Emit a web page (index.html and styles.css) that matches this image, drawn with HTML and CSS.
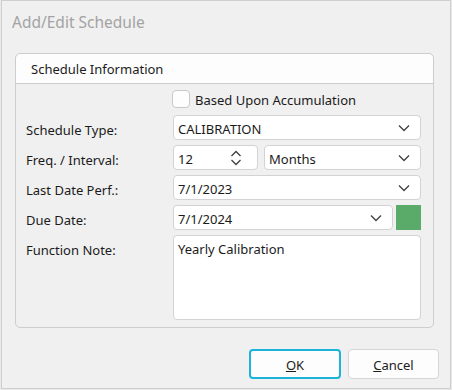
FILE: index.html
```html
<!DOCTYPE html>
<html lang="en">
<head>
    <meta charset="UTF-8">
    <title>Add/Edit Schedule</title>
    <link rel="stylesheet" href="styles.css">
</head>
<body>

<div class="dialog">
    <div class="dialog-title">Add/Edit Schedule</div>

    <div class="group">
        <div class="group-header">Schedule Information</div>
        <div class="group-body">
            <div class="label"></div>
            <label class="check-row">
                <span class="checkbox"></span>
                <span>Based Upon Accumulation</span>
            </label>

            <div class="label">Schedule Type:</div>
            <div class="field combo">
                <span>CALIBRATION</span>
                <svg class="chevron" width="12" height="8" viewBox="0 0 12 8"><path d="M1 1.5 L6 6.5 L11 1.5" /></svg>
            </div>

            <div class="label">Freq. / Interval:</div>
            <div class="pair">
                <div class="field spin">
                    <span>12</span>
                    <svg class="spinner" width="12" height="16" viewBox="0 0 12 16"><path d="M1.5 6 L6 1.5 L10.5 6 M1.5 10 L6 14.5 L10.5 10" /></svg>
                </div>
                <div class="field combo grow">
                    <span>Months</span>
                    <svg class="chevron" width="12" height="8" viewBox="0 0 12 8"><path d="M1 1.5 L6 6.5 L11 1.5" /></svg>
                </div>
            </div>

            <div class="label">Last Date Perf.:</div>
            <div class="field combo">
                <span>7/1/2023</span>
                <svg class="chevron" width="12" height="8" viewBox="0 0 12 8"><path d="M1 1.5 L6 6.5 L11 1.5" /></svg>
            </div>

            <div class="label">Due Date:</div>
            <div class="pair">
                <div class="field combo grow">
                    <span>7/1/2024</span>
                    <svg class="chevron" width="12" height="8" viewBox="0 0 12 8"><path d="M1 1.5 L6 6.5 L11 1.5" /></svg>
                </div>
                <div class="status-swatch"></div>
            </div>

            <div class="label label-top">Function Note:</div>
            <div class="field note">Yearly Calibration</div>
        </div>
    </div>

    <div class="button-row">
        <button class="button default"><u>O</u>K</button>
        <button class="button"><u>C</u>ancel</button>
    </div>
</div>

</body>
</html>
```

FILE: styles.css
```css
body {
    margin: 0;
    background-color: #e9e9e9;
    font-family: "Noto Sans", "Open Sans", sans-serif;
    font-size: 13px;
    color: #1b1b1b;
}
.dialog {
    box-sizing: border-box;
    width: 450px;
    height: 389px;
    margin-left: 1px;
    background-color: #f0f0f0;
    border: 1px solid #cfcfcf;
    display: flex;
    flex-direction: column;
}
.dialog-title {
    font-size: 15.5px;
    color: #a3a3a3;
    padding: 10px 0 0 10px;
    height: 42px;
}
.group {
    margin: 0 16px 0 13px;
    border: 1px solid #cdcdcd;
    border-radius: 5px;
}
.group-header {
    background-color: #fdfdfd;
    height: 29px;
    line-height: 31px;
    padding-left: 15px;
    border-bottom: 1px solid #cdcdcd;
    border-radius: 5px 5px 0 0;
}
.group-body {
    display: grid;
    grid-template-columns: 147px 1fr;
    grid-template-rows: 22px 25px 25px 25px 25px 85px;
    row-gap: 5px;
    padding: 4px 12px 7px 10px;
}
.label {
    display: flex;
    align-items: center;
    padding-top: 5px;
}
.label-top {
    align-items: flex-start;
    padding-top: 6px;
}
.check-row {
    display: flex;
    align-items: center;
    gap: 5px;
}
.check-row span:last-child {
    padding-top: 2px;
}
.checkbox {
    box-sizing: border-box;
    width: 18px;
    height: 18px;
    margin-left: -1px;
    background-color: #fdfdfd;
    border: 1px solid #c9c9c9;
    border-radius: 4px;
}
.field {
    box-sizing: border-box;
    background-color: #ffffff;
    border: 1px solid #d3d3d3;
    border-radius: 4px;
    padding: 3px 4px 0;
    display: flex;
    align-items: center;
    justify-content: space-between;
}
.field svg {
    margin-top: -3px;
}
.combo .chevron {
    margin-right: 6px;
    fill: none;
    stroke: #404040;
    stroke-width: 1.3;
}
.pair {
    display: flex;
    gap: 6px;
}
.spin {
    width: 85px;
}
.spinner {
    margin-right: 11px;
    fill: none;
    stroke: #404040;
    stroke-width: 1.3;
}
.grow {
    flex: 1;
}
.status-swatch {
    width: 25px;
    margin-left: -3px;
    background-color: #5aaa6a;
}
.note {
    align-items: flex-start;
    padding-top: 4px;
}
.button-row {
    display: flex;
    justify-content: flex-end;
    gap: 7px;
    margin-top: auto;
    padding: 0 11px 9px 0;
}
.button {
    box-sizing: border-box;
    width: 91px;
    height: 30px;
    padding-top: 2px;
    font-family: inherit;
    font-size: 13px;
    color: #1b1b1b;
    background-color: #fdfdfd;
    border: 1px solid #d6d6d6;
    border-radius: 4px;
}
.button.default {
    width: 92px;
    border: 2px solid #1ab4dc;
}
```
